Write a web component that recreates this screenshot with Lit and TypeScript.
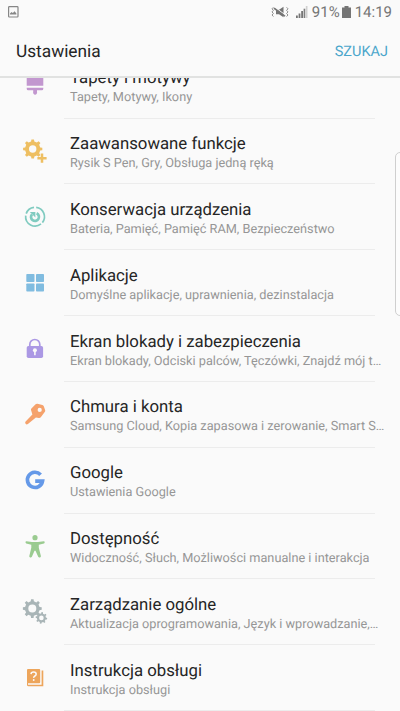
import { LitElement, html, svg, css } from "lit";
import { customElement, property } from "lit/decorators.js";

function gear(cx: number, cy: number, outer: number, inner: number, hole: number, teeth: number, phase = 0): string {
  const pts: string[] = [];
  const step = (Math.PI * 2) / teeth;
  for (let i = 0; i < teeth; i++) {
    const a = i * step + phase - Math.PI / 2;
    const corners: [number, number][] = [[inner, -0.27], [outer, -0.17], [outer, 0.17], [inner, 0.27]];
    for (const [r, f] of corners) {
      pts.push(`${(cx + r * Math.cos(a + f * step)).toFixed(2)} ${(cy + r * Math.sin(a + f * step)).toFixed(2)}`);
    }
  }
  return `M${pts.join("L")}ZM${cx - hole} ${cy}a${hole} ${hole} 0 1 0 ${hole * 2} 0a${hole} ${hole} 0 1 0 ${-hole * 2} 0Z`;
}

const icons: Record<string, unknown> = {
  brush: svg`<g fill="#c297cf"><path d="M7.7 5h16.6v10.8H7.7zM7.7 17.8h16.6v1q0 1.5-1.5 1.5H18v1.6a2 2.1 0 1 1-3.8 0v-1.6H9.2q-1.5 0-1.5-1.5z"/></g>`,
  advanced: svg`<path fill="#eebf62" fill-rule="evenodd" d=${gear(13.7, 13, 9.7, 7.7, 3.7, 8)} /><path d="M23 17.6v9.2M18.4 22.2h9.2" stroke="#eebf62" stroke-width="2.5"/>`,
  care: svg`<g fill="none" stroke="#80cbc0"><path d="M17.2 6.4A9.4 9.4 0 0 1 23.4 21.6M22 22.9A9.4 9.4 0 0 1 6.7 14.6M7.2 12.6A9.4 9.4 0 0 1 15 6.4" stroke-width="1.7"/><path d="M17.6 12.3a4 4 0 1 1-4.6 1" stroke-width="2.7"/></g><path fill="#80cbc0" d="M10.8 11h5.6v5.6z"/>`,
  apps: svg`<g fill="#80bce0"><rect x="7.3" y="7" width="8.2" height="8" rx=".8"/><rect x="17" y="7" width="8" height="8" rx=".8"/><rect x="7.3" y="16.5" width="8.2" height="8" rx=".8"/><rect x="17" y="16.5" width="8" height="8" rx=".8"/></g>`,
  lock: svg`<path d="M10.8 14v-2.5a5 5 0 0 1 10 0V14" fill="none" stroke="#ab98e4" stroke-width="1.7"/><rect x="7.7" y="12.9" width="16.4" height="12.2" rx="1.8" fill="#ab98e4"/><circle cx="15.9" cy="17.3" r="2" fill="#fafafa"/><path d="M15.9 18v4.3" stroke="#fafafa" stroke-width="1.6"/>`,
  key: svg`<path fill="#f5a26c" fill-rule="evenodd" d="M12.4 9.4L16.6 5.3Q17.4 4.6 18.4 4.8L23.4 6Q24.4 6.2 24.8 7.2L26.2 11.3Q26.4 12.3 25.7 13.1L21.8 18.2Q21 19.1 19.9 19L16.9 18.5L8.9 25.1Q7.5 25.9 6.6 24.8Q5.6 23.6 6.6 22.4L13.4 15.6L12 11Q11.8 10.1 12.4 9.4ZM18.6 10.9a2.1 2.1 0 1 0 4.2 0a2.1 2.1 0 1 0-4.2 0Z"/>`,
  google: svg`<path d="M21.6 9.7A7.6 7.6 0 1 0 23.5 16.2H16.2" fill="none" stroke="#6599e8" stroke-width="3.7"/>`,
  access: svg`<g fill="#9acb90"><circle cx="16" cy="6.7" r="2.6"/><path d="M7.4 10.2L13 10.9H19L24.8 10.2Q25.7 10.3 25.7 11.2T25 12.4L19.8 13.7V16.7L21.9 25Q22 26.1 20.9 26.5T19.2 25.8L16.5 19.8H15.5L12.9 25.8Q12.2 26.8 11.1 26.4T10.3 25L12.3 16.7V13.7L7.2 12.4Q6.4 12.1 6.5 11.1T7.4 10.2Z"/></g>`,
  general: svg`<path fill="#a9b5b7" fill-rule="evenodd" d=${gear(13.3, 12.6, 9.5, 7.4, 4, 8)} /><path fill="#a9b5b7" fill-rule="evenodd" d=${gear(22.4, 21.9, 5.8, 4.5, 2.3, 8, 0.15)} />`,
  manual: svg`<rect x="8" y="7" width="13.2" height="14.2" rx="1" fill="#eda55b"/><path d="M22.6 8.5H24.3V24.3H9.5Q8 24.3 8 22.8V20.5H9V22.7H22.6Z" fill="#eda55b"/><path d="M12 12.1q.1-2.1 2.6-2.1t2.6 2.1q0 1.1-1.3 1.9t-1.2 1.9" fill="none" stroke="#fafafa" stroke-width="1.5"/><circle cx="14.7" cy="18" r=".95" fill="#fafafa"/>`,
};

interface Item { icon: string; title: string; note: string; }

const items: Item[] = [
  { icon: "brush", title: "Tapety i motywy", note: "Tapety, Motywy, Ikony" },
  { icon: "advanced", title: "Zaawansowane funkcje", note: "Rysik S Pen, Gry, Obsługa jedną ręką" },
  { icon: "care", title: "Konserwacja urządzenia", note: "Bateria, Pamięć, Pamięć RAM, Bezpieczeństwo" },
  { icon: "apps", title: "Aplikacje", note: "Domyślne aplikacje, uprawnienia, dezinstalacja" },
  { icon: "lock", title: "Ekran blokady i zabezpieczenia", note: "Ekran blokady, Odciski palców, Tęczówki, Znajdź mój t…" },
  { icon: "key", title: "Chmura i konta", note: "Samsung Cloud, Kopia zapasowa i zerowanie, Smart S…" },
  { icon: "google", title: "Google", note: "Ustawienia Google" },
  { icon: "access", title: "Dostępność", note: "Widoczność, Słuch, Możliwości manualne i interakcja" },
  { icon: "general", title: "Zarządzanie ogólne", note: "Aktualizacja oprogramowania, Język i wprowadzanie,…" },
  { icon: "manual", title: "Instrukcja obsługi", note: "Instrukcja obsługi" },
];

@customElement("settings-row")
export class SettingsRow extends LitElement {
  @property({ attribute: false }) item!: Item;

  static styles = css`
    :host { display: flex; height: 65.84px; flex: none; }
    .icon { width: 32px; height: 32px; margin: 16.9px 13px 0 19px; flex: none; }
    .body { width: 311px; flex: none; box-sizing: border-box; border-bottom: 1px solid #ececec; padding: 14.4px 0 0 6px; white-space: nowrap; }
    .title { font-size: 16.75px; line-height: 22px; color: #252525; }
    .note { font-size: 12.72px; line-height: 16px; margin-top: 1px; color: #969696; }
  `;

  render() {
    return html`
      <svg class="icon" viewBox="0 0 32 32">${icons[this.item.icon]}</svg>
      <div class="body">
        <div class="title">${this.item.title}</div>
        <div class="note">${this.item.note}</div>
      </div>`;
  }
}

@customElement("app-root")
export class AppRoot extends LitElement {
  static styles = css`
    :host { display: flex; flex-direction: column; position: relative; width: 400px; height: 711px; overflow: hidden; background: #fafafa; font-family: Roboto, sans-serif; text-rendering: geometricPrecision; }
    .status { height: 24px; flex: none; display: flex; align-items: center; color: #757575; font-size: 15px; line-height: 24px; padding: 0 8px 0 7px; }
    .photo { width: 12px; height: 12px; margin-right: auto; }
    .mute { width: 18px; height: 12px; margin-right: 6px; }
    .signal { width: 13px; height: 12px; margin-right: 4px; }
    .battery { width: 9px; height: 12px; margin: 0 4px 0 2px; }
    .header { height: 49px; padding: 3px 12px 0 16px; flex: none; display: flex; align-items: center; justify-content: space-between; border-bottom: 2px solid #e1e2e1; }
    .heading { font-size: 17.3px; line-height: 20px; padding-top: 1px; color: #252525; }
    .search { font-size: 14.5px; color: #4ba6cb; }
    .list { flex: 1; min-height: 0; overflow: hidden; display: flex; flex-direction: column; }
    .list settings-row:first-child { margin-top: -25.2px; }
    .handle { position: absolute; left: 395px; top: 152px; width: 10px; height: 162px; border: 1px solid #cfcfcf; border-radius: 5px; background: #fcfcfc; }
  `;

  render() {
    return html`
      <div class="status">
        <svg class="photo" viewBox="0 0 12 12"><rect x="1.6" y=".6" width="9.4" height="10.4" rx=".8" fill="none" stroke="#868686" stroke-width="1.2"/><path d="M3 8.5V7.6L4.6 6l1.2 1L7.6 5.2 9.4 7.4v1.1z" fill="#868686"/></svg>
        <svg class="mute" viewBox="0 0 18 14" preserveAspectRatio="none"><path d="M5 4.5h3L12.5 1v12L8 9.7H5z" fill="#757575"/><path d="M4 1.6L14.6 10.8" stroke="#fafafa" stroke-width="1.1"/><path d="M3 2.5L14 12" stroke="#757575" stroke-width="1.8"/><path d="M2.4 1.5L1 3.3 2.4 5.1 1 6.9 2.4 8.7 1 10.5 2.4 12.3M15.6 1.5L17 3.3 15.6 5.1 17 6.9 15.6 8.7 17 10.5 15.6 12.3" fill="none" stroke="#858585" stroke-width="1"/></svg>
        <svg class="signal" viewBox="0 0 13 12"><path d="M1 9.5h1.8V12H1zM3.6 7.5h1.8V12H3.6zM6.2 5h1.8v7H6.2z" fill="#757575"/><path d="M8.6 2.7h1.7V12H8.6z" fill="#808080"/><path d="M10.8 0h1.7v12h-1.7z" fill="#d0d0d0"/></svg>
        <span>91%</span>
        <svg class="battery" viewBox="0 0 9 13" preserveAspectRatio="none"><path d="M2.5 0h4v1.5H9V13H0V1.5h2.5z" fill="#757575"/></svg>
        <span>14:19</span>
      </div>
      <div class="header"><span class="heading">Ustawienia</span><span class="search">SZUKAJ</span></div>
      <div class="list">${items.map((item) => html`<settings-row .item=${item}></settings-row>`)}</div>
      <div class="handle"></div>`;
  }
}
